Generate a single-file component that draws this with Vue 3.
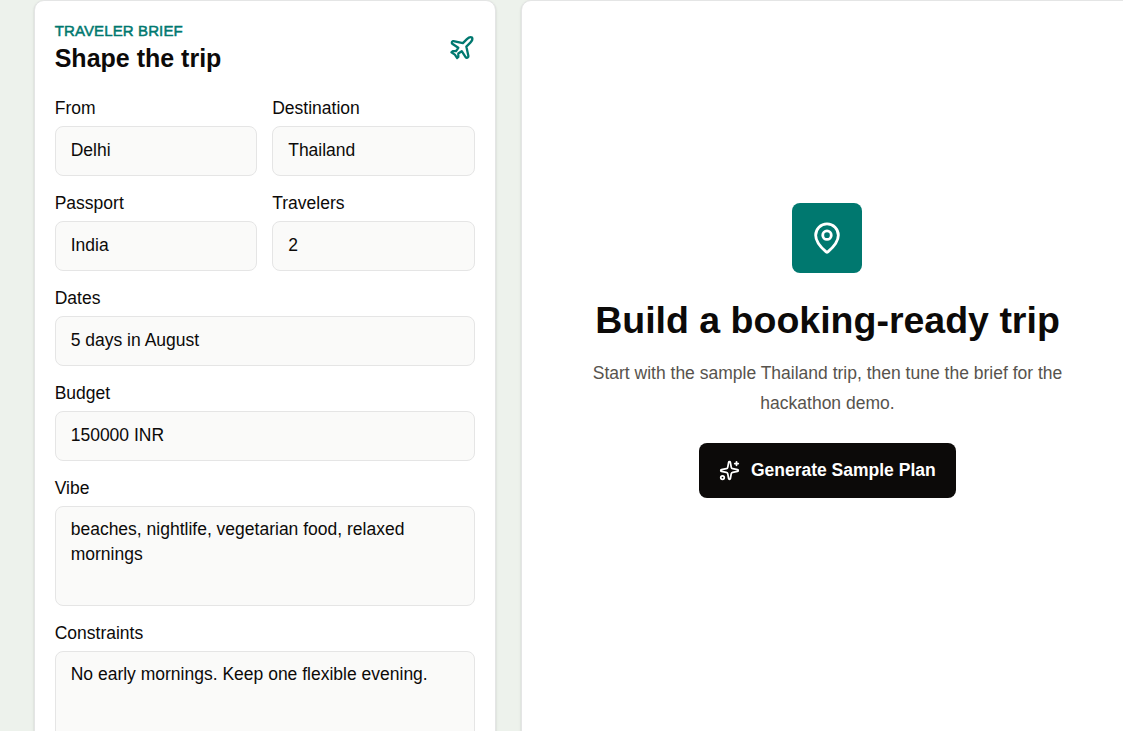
<template>
    <main class="page">
        <!-- Trip form -->
        <section class="card brief">
            <header class="brief-header">
                <div>
                    <p class="eyebrow">Traveler brief</p>
                    <h2 class="brief-title">Shape the trip</h2>
                </div>
                <svg class="icon icon-plane" viewBox="0 0 24 24">
                    <path d="M17.8 19.2 16 11l3.5-3.5C21 6 21.5 4 21 3c-1-.5-3 0-4.5 1.5L13 8 4.8 6.2c-.5-.1-.9.1-1.1.5l-.3.5c-.2.5-.1 1 .3 1.3L9 12l-2 3H4l-1 1 3 2 2 3 1-1v-3l3-2 3.5 5.3c.3.4.8.5 1.3.3l.5-.2c.4-.3.6-.7.5-1.2z" />
                </svg>
            </header>

            <form class="brief-form" @submit.prevent>
                <label
                    v-for="field in fields"
                    :key="field.key"
                    class="field"
                    :class="{ wide: field.wide }"
                >
                    <span class="field-label">{{ field.label }}</span>
                    <textarea
                        v-if="field.multiline"
                        v-model="brief[field.key]"
                        class="control area"
                        spellcheck="false"
                    ></textarea>
                    <input v-else v-model="brief[field.key]" class="control" type="text" />
                </label>
            </form>
        </section>

        <!-- Empty state -->
        <section class="card empty">
            <div class="pin-tile">
                <svg class="icon icon-pin" viewBox="0 0 24 24">
                    <path d="M20 10c0 4.993-5.539 10.193-7.399 11.799a1 1 0 0 1-1.202 0C9.539 20.193 4 14.993 4 10a8 8 0 0 1 16 0" />
                    <circle cx="12" cy="10" r="3" />
                </svg>
            </div>
            <h1 class="empty-title">Build a booking-ready trip</h1>
            <p class="empty-text">
                Start with the sample Thailand trip, then tune the brief for the hackathon demo.
            </p>
            <button class="generate" type="button">
                <svg class="icon icon-sparkles" viewBox="0 0 24 24">
                    <path d="M11.017 2.814a1 1 0 0 1 1.966 0l1.051 5.558a2 2 0 0 0 1.594 1.594l5.558 1.051a1 1 0 0 1 0 1.966l-5.558 1.051a2 2 0 0 0-1.594 1.594l-1.051 5.558a1 1 0 0 1-1.966 0l-1.051-5.558a2 2 0 0 0-1.594-1.594l-5.558-1.051a1 1 0 0 1 0-1.966l5.558-1.051a2 2 0 0 0 1.594-1.594z" />
                    <path d="M20 2v4" />
                    <path d="M22 4h-4" />
                    <circle cx="4" cy="20" r="2" />
                </svg>
                <span>Generate Sample Plan</span>
            </button>
        </section>
    </main>
</template>

<script setup>
import { reactive } from 'vue';

const fields = [
    { key: 'from', label: 'From' },
    { key: 'destination', label: 'Destination' },
    { key: 'passport', label: 'Passport' },
    { key: 'travelers', label: 'Travelers' },
    { key: 'dates', label: 'Dates', wide: true },
    { key: 'budget', label: 'Budget', wide: true },
    { key: 'vibe', label: 'Vibe', wide: true, multiline: true },
    { key: 'constraints', label: 'Constraints', wide: true, multiline: true }
];

const brief = reactive({
    from: 'Delhi',
    destination: 'Thailand',
    passport: 'India',
    travelers: '2',
    dates: '5 days in August',
    budget: '150000 INR',
    vibe: 'beaches, nightlife, vegetarian food, relaxed mornings',
    constraints: 'No early mornings. Keep one flexible evening.'
});
</script>

<style>
body {
    background: #edf2ec;
    overflow: hidden;
}
</style>

<style scoped>
.page {
    display: grid;
    grid-template-columns: 462px 613.6px;
    gap: 25px;
    height: 731px;
    padding-left: 33.7px;
    overflow: hidden;
    box-sizing: border-box;
    font-family: 'Liberation Sans', Arial, sans-serif;
    font-size: 17.5px;
    line-height: 25px;
    color: #0c0a09;
}

.card {
    box-sizing: border-box;
    height: 790px;
    background: #fff;
    border: 1px solid #e4e5e5;
    border-radius: 10px;
    box-shadow: 0 1px 3px rgba(0, 0, 0, 0.1), 0 1px 2px rgba(0, 0, 0, 0.06);
}

.icon {
    display: block;
    flex-shrink: 0;
    fill: none;
    stroke: currentColor;
    stroke-width: 2;
    stroke-linecap: round;
    stroke-linejoin: round;
}

.brief {
    padding: 20px;
}

.brief-header {
    display: flex;
    align-items: center;
    justify-content: space-between;
    margin-bottom: 20px;
}

.eyebrow {
    margin: 0;
    font-size: 15px;
    line-height: 20px;
    letter-spacing: 0.12px;
    text-transform: uppercase;
    color: #00786f;
    -webkit-text-stroke: 0.5px #00786f;
}

.brief-title {
    margin: 0;
    font-size: 25px;
    line-height: 35px;
    font-weight: 700;
}

.icon-plane {
    width: 27.5px;
    height: 27.5px;
    margin: 0 -1px 1px 0;
    color: #00786f;
}

.brief-form {
    display: grid;
    grid-template-columns: 1fr 1fr;
    gap: 15px;
}

.field {
    display: flex;
    flex-direction: column;
    gap: 5px;
    min-width: 0;
}

.field.wide {
    grid-column: span 2;
}

.control {
    box-sizing: border-box;
    display: block;
    width: 100%;
    height: 50px;
    margin: 0;
    padding: 0 15px 2px;
    font: inherit;
    color: inherit;
    background: #fafaf9;
    border: 1px solid #e5e5e5;
    border-radius: 8px;
    outline: none;
}

.area {
    height: 100px;
    padding: 10px 15px;
    resize: none;
}

.empty {
    display: flex;
    flex-direction: column;
    align-items: center;
    padding-top: 202px;
    text-align: center;
}

.pin-tile {
    display: flex;
    align-items: center;
    justify-content: center;
    box-sizing: border-box;
    width: 70px;
    height: 70px;
    color: #fff;
    background: #00786f;
    border-radius: 8px;
}

.icon-pin {
    width: 34px;
    height: 34px;
}

.empty-title {
    margin: 25px 0 0;
    font-size: 37.5px;
    line-height: 45px;
    font-weight: 700;
}

.empty-text {
    width: 480px;
    margin: 15px 0 0;
    line-height: 30px;
    color: #57534d;
}

.generate {
    display: flex;
    align-items: center;
    gap: 10.6px;
    height: 55px;
    margin-top: 25px;
    padding: 0 20px;
    font: inherit;
    font-weight: 700;
    color: #fff;
    background: #0c0a09;
    border: none;
    border-radius: 8px;
    cursor: pointer;
}

.icon-sparkles {
    width: 21px;
    height: 21px;
}
</style>
